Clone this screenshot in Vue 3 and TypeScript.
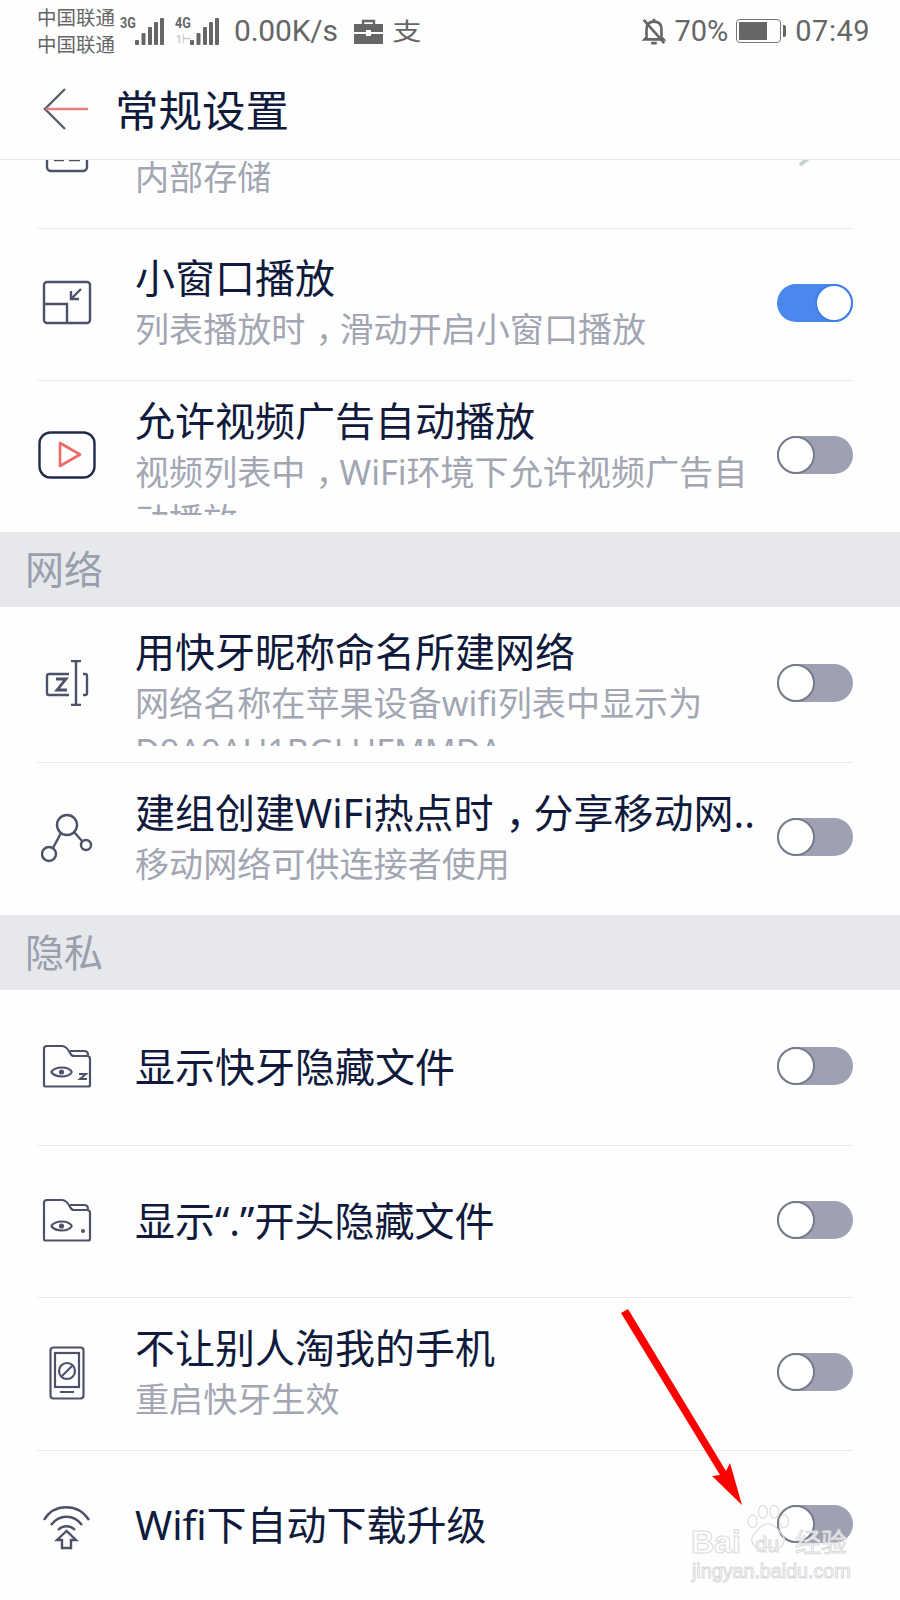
<script setup lang="ts">
type Row = {
  icon: string;
  title: string;
  sub?: string;
  on?: boolean;
  height: number;
};

type Section = { name?: string; rows: Row[] };

const sections: Section[] = [
  {
    rows: [
      { icon: "pip", title: "小窗口播放", sub: "列表播放时，滑动开启小窗口播放", on: true, height: 152 },
      {
        icon: "video",
        title: "允许视频广告自动播放",
        sub: "视频列表中，WiFi环境下允许视频广告自动播放",
        height: 151,
      },
    ],
  },
  {
    name: "网络",
    rows: [
      {
        icon: "rename",
        title: "用快牙昵称命名所建网络",
        sub: "网络名称在苹果设备wifi列表中显示为 D9A9AU1BGLUFMMDA",
        height: 156,
      },
      { icon: "share", title: "建组创建WiFi热点时，分享移动网..", sub: "移动网络可供连接者使用", height: 152 },
    ],
  },
  {
    name: "隐私",
    rows: [
      { icon: "hideZ", title: "显示快牙隐藏文件", height: 156 },
      { icon: "hideDot", title: "显示“.”开头隐藏文件", height: 152 },
      { icon: "phone", title: "不让别人淘我的手机", sub: "重启快牙生效", height: 153 },
      { icon: "wifi", title: "Wifi下自动下载升级", height: 150 },
    ],
  },
];

// the comma sits in the middle of its cell on this phone's font
const parts = (s: string) => s.split("，");
</script>

<template>
  <div class="screen">
    <div class="status">
      <div class="carriers"><span>中国联通</span><span>中国联通</span></div>
      <div class="signal">
        <span class="net">3G</span>
        <svg width="29" height="27" viewBox="0 0 29 27"><g fill="#666">
          <rect x="0" y="22" width="4" height="5" rx="1" /><rect x="6.500" y="15" width="4" height="12" rx="1" /><rect x="13" y="9" width="4" height="18" rx="1" /><rect x="19" y="4" width="4" height="23" rx="1" /><rect x="25" y="0" width="4" height="27" rx="1" />
        </g></svg>
      </div>
      <div class="signal second">
        <span class="net">4G<i>1⊢</i></span>
        <svg width="29" height="27" viewBox="0 0 29 27"><g fill="#666">
          <rect x="0" y="22" width="4" height="5" rx="1" /><rect x="6.500" y="15" width="4" height="12" rx="1" /><rect x="13" y="9" width="4" height="18" rx="1" /><rect x="19" y="4" width="4" height="23" rx="1" /><rect x="25" y="0" width="4" height="27" rx="1" />
        </g></svg>
      </div>
      <span class="speed">0.00K/s</span>
      <svg class="case" width="29" height="25" viewBox="0 0 29 25">
        <path d="M9 5V2h11v3" fill="none" stroke="#666" stroke-width="2.4" />
        <path d="M0 5h29v8H17v-2h-5v2H0zM0 15h12v2h5v-2h12v10H0z" fill="#666" />
      </svg>
      <span class="alipay">支</span>
      <div class="spacer"></div>
      <svg class="bell" width="26" height="28" viewBox="0 0 26 30" fill="none" stroke="#666" stroke-width="2.800">
        <path d="M5 22V13c0-5 3-8 8-8s8 3 8 8v9l2 2H3z" />
        <path d="M13 2v3M10 28h6M2 3l22 25" />
      </svg>
      <span class="pct">70%</span>
      <div class="battery"><div class="level"></div></div>
      <div class="nub"></div>
      <span class="clock">07:49</span>
    </div>

    <header class="bar">
      <svg class="back" width="46" height="44" viewBox="0 0 46 44" fill="none" stroke-width="2.4">
        <path d="M22 2 2 22l20 20" stroke="#5a5f6e" />
        <path d="M3 22h42" stroke="#f07c7c" />
      </svg>
      <h1>常规设置</h1>
    </header>

    <div class="list">
      <div class="row first">
        <div class="icon">
          <svg width="44" height="44" viewBox="0 0 44 44" fill="none" stroke="#4d5268" stroke-width="2.4">
            <rect x="2" y="2" width="40" height="40" rx="4" />
            <path d="M9 31h10M24 31h11" />
          </svg>
        </div>
        <div class="text">
          <div class="title">存储位置</div>
          <div class="sub">内部存储</div>
        </div>
        <svg class="chev" width="22" height="34" viewBox="0 0 22 34" fill="none" stroke="#c6d0d2" stroke-width="4">
          <path d="M3 5l15 12L3 29" />
        </svg>
      </div>

      <template v-for="sec in sections" :key="sec.name ?? 'top'">
        <div v-if="sec.name" class="section">{{ sec.name }}</div>
        <div
          v-for="row in sec.rows"
          :key="row.title"
          class="row"
          :class="{ tall: row.icon === 'rename' }"
          :style="{ height: row.height + 'px' }"
        >
          <div class="icon">
            <svg v-if="row.icon === 'pip'" width="50" height="46" viewBox="0 0 50 46" fill="none" stroke="#4d5268" stroke-width="2.4">
              <rect x="2" y="2" width="46" height="41" rx="3" />
              <path d="M2 24h23v19" />
              <path d="M39 9 29 19M29 11v8h8" />
            </svg>
            <svg v-else-if="row.icon === 'video'" width="58" height="48" viewBox="0 0 58 48" fill="none">
              <rect x="1.500" y="1.500" width="55" height="45" rx="11" stroke="#23294a" stroke-width="2.4" />
              <path d="M22 12v23l20-11.500z" stroke="#ee6a68" stroke-width="2.600" stroke-linejoin="round" />
            </svg>
            <svg v-else-if="row.icon === 'rename'" width="44" height="46" viewBox="0 0 44 46" fill="none" stroke="#4d5268" stroke-width="2.4">
              <path d="M24 14H4c-1.500 0-2 1-2 2v17c0 1 .5 2 2 2h20" />
              <path d="M31 1v44M26 1h10M26 45h10" />
              <path d="M38 14h2c1 0 2 1 2 2v17c0 1-1 2-2 2h-2" />
              <path d="M11 19h10l-9 11h10" stroke-width="2.800" />
            </svg>
            <svg v-else-if="row.icon === 'share'" width="52" height="50" viewBox="0 0 52 50" fill="none" stroke="#4d5268" stroke-width="2.4">
              <circle cx="26" cy="12" r="10" />
              <circle cx="8" cy="41" r="7" />
              <circle cx="45" cy="32" r="5" />
              <path d="M20 20 12 35M33 19l8 9" />
            </svg>
            <svg v-else-if="row.icon === 'hideZ' || row.icon === 'hideDot'" width="50" height="44" viewBox="0 0 50 44" fill="none" stroke="#4d5268" stroke-width="2.2">
              <path d="M2 41V5c0-2 1-3 3-3h15c4 0 6 3 8 7 1 2 2 3 4 3h13c2 0 3 1 3 3v26c0 1-1 1.500-2 1.500H3c-.5 0-1-.5-1-1.500z" />
              <path d="M28 7h14c2 0 4 1 4 4" />
              <path d="M9 28c5-6 17-6 21 0M9 28c5 6 17 6 21 0" />
              <circle cx="19.500" cy="28" r="2.600" fill="#4d5268" stroke="none" />
              <path v-if="row.icon === 'hideZ'" d="M37 30h7l-6 5h7" stroke-width="2" />
              <circle v-else cx="41" cy="33" r="2" fill="#4d5268" stroke="none" />
            </svg>
            <svg v-else-if="row.icon === 'phone'" width="36" height="54" viewBox="0 0 36 54" fill="none" stroke="#4d5268" stroke-width="2.2">
              <rect x="1.500" y="1.500" width="33" height="51" rx="3" />
              <rect x="6" y="7" width="24" height="34" />
              <circle cx="18" cy="25" r="8" />
              <path d="m13 30 10-10M11 46h14" />
            </svg>
            <svg v-else width="50" height="50" viewBox="0 0 50 50" fill="none" stroke="#4d5268" stroke-width="2.4">
              <path d="M2 20C12 3 36 3 47 20M9 25c8-11 23-11 31 0M16 30c5-5 12-5 17 0" />
              <path d="M24.500 31 15 40h5v8h9v-8h5z" />
            </svg>
          </div>
          <div class="text">
            <div class="title">
              <template v-for="(p, i) in parts(row.title)" :key="i"><span v-if="i" class="comma">，</span>{{ p }}</template>
            </div>
            <div v-if="row.sub" class="sub">
              <template v-for="(p, i) in parts(row.sub)" :key="i"><span v-if="i" class="comma">，</span>{{ p }}</template>
            </div>
          </div>
          <div class="toggle" :class="{ on: row.on }"><div class="knob"></div></div>
        </div>
      </template>
    </div>

    <svg class="arrow" width="900" height="1600" viewBox="0 0 900 1600">
      <path d="M621 1313l7-4 98 162 4-8 12 42-30-29 8-1z" fill="#ff0000" />
    </svg>

    <div class="mark">
      <svg class="paw" width="46" height="52" viewBox="0 0 72 76" fill="none" stroke="#dedede" stroke-width="2">
        <ellipse cx="12" cy="26" rx="7" ry="10" />
        <ellipse cx="28" cy="11" rx="7" ry="10" />
        <ellipse cx="46" cy="11" rx="7" ry="10" />
        <ellipse cx="61" cy="26" rx="7" ry="10" />
        <path d="M36 30c11 0 15 9 22 16 7 8 2 23-10 22-5 0-8-2-12-2s-7 2-12 2C12 69 7 54 14 46c7-7 11-16 22-16z" />
      </svg>
      <span class="bai">Bai</span>
      <span class="du">du</span>
      <span class="jy">经验</span>
      <span class="url">jingyan.baidu.com</span>
    </div>
  </div>
</template>

<style>
body {
  background: #fff;
}
</style>

<style scoped>
.screen {
  position: relative;
  width: 900px;
  height: 1600px;
  overflow: hidden;
  background: #fefefe;
  display: flex;
  flex-direction: column;
  font-family: "Noto Sans", "Noto Sans CJK SC", sans-serif;
  color: #0f1a3c;
}

.status {
  height: 62px;
  padding: 0 30px 0 37px;
  display: flex;
  align-items: center;
  color: #666;
  flex: none;
}

.carriers {
  display: flex;
  flex-direction: column;
  font-size: 19.500px;
  line-height: 27.500px;
  width: 83px;
}

.signal {
  display: flex;
  align-items: flex-end;
  height: 27px;
}

.second {
  margin-left: 11px;
}

.net {
  position: relative;
  align-self: flex-start;
  font: 700 14px/11px "Roboto", sans-serif;
  transform: scaleX(0.9);
  transform-origin: left;
  width: 15px;
}

.net i {
  position: absolute;
  left: 1px;
  top: 16px;
  font: 700 11px/11px "Roboto", sans-serif;
  color: #ccc;
}

.speed {
  margin-left: 15px;
  font: 400 30px/30px "Roboto", sans-serif;
  letter-spacing: -0.200px;
}

.case {
  margin-left: 16px;
}

.alipay {
  margin-left: 10px;
  font-size: 28px;
  line-height: 30px;
  transform: scale(1.05, 0.85);
}

.spacer {
  flex: 1;
}

.pct {
  margin-left: 7px;
  font: 400 29px/30px "Roboto", sans-serif;
}

.battery {
  margin-left: 8px;
  width: 45px;
  height: 24px;
  border: 1.500px solid #777;
  border-radius: 4px;
  padding: 2px;
  box-sizing: border-box;
}

.level {
  width: 28px;
  height: 100%;
  background: #666;
}

.nub {
  width: 3px;
  height: 12px;
  margin-left: 2px;
  background: #666;
  border-radius: 0 2px 2px 0;
}

.clock {
  margin-left: 9px;
  font: 400 29px/30px "Roboto", sans-serif;
  letter-spacing: 0.500px;
}

.bar {
  height: 98px;
  flex: none;
  padding-left: 43px;
  display: flex;
  align-items: center;
  gap: 26px;
  border-bottom: 1px solid #e4e6e8;
  box-sizing: border-box;
}

.back {
  margin-bottom: 4px;
}

.bar h1 {
  margin: 0 0 2px;
  font-size: 43.500px;
  font-weight: 400;
  line-height: 50px;
  color: #0f1a3c;
}

.list {
  flex: 1;
  min-height: 0;
  overflow: hidden;
}

.row {
  margin: 0 47px 0 37px;
  display: flex;
  align-items: center;
  border-bottom: 1px solid #e8e9ec;
  box-sizing: border-box;
}

.row:has(+ .section),
.row:last-child {
  border-bottom: none;
}

.first {
  height: 152px;
  margin-top: -83px;
}

.icon {
  width: 60px;
  flex: none;
  display: flex;
  justify-content: center;
  margin-bottom: 3px;
}

.text {
  margin-left: 38px;
  flex: 1;
  min-width: 0;
  padding-bottom: 2px;
}

.text:has(.sub) {
  padding-bottom: 3px;
}

.tall .text {
  padding-top: 6px;
}

.title {
  font-size: 40px;
  line-height: 50px;
  white-space: nowrap;
}

.title:has(+ .sub) {
  margin-bottom: 2px;
}

.sub {
  font-size: 34.100px;
  line-height: 48px;
  max-height: 67px;
  overflow: hidden;
  color: #a2a6b3;
}

.comma {
  display: inline-block;
  transform: translateX(0.3em);
}

.chev {
  margin-right: 34px;
}

.toggle {
  width: 76px;
  height: 38px;
  flex: none;
  margin-left: 14px;
  margin-bottom: 4px;
  border-radius: 19px;
  background: #9ea1b1;
  position: relative;
}

.knob {
  position: absolute;
  left: 0;
  top: 0;
  width: 38px;
  height: 38px;
  box-sizing: border-box;
  border: 2px solid #757a8d;
  border-radius: 50%;
  background: #fff;
}

.toggle.on {
  background: #4a88ee;
}

.toggle.on .knob {
  left: auto;
  right: 0;
  border-color: #3d7fec;
}

.section {
  height: 75px;
  box-sizing: border-box;
  padding: 0 0 6px 25px;
  display: flex;
  align-items: center;
  background: #e6e8ec;
  color: #9a9fae;
  font-size: 39px;
}

.arrow {
  position: absolute;
  left: 0;
  top: 0;
  pointer-events: none;
}

.mark {
  position: absolute;
  left: 688px;
  top: 1500px;
  width: 170px;
  height: 84px;
  font-family: "Liberation Sans", "Noto Sans CJK SC", sans-serif;
}

.mark span {
  position: absolute;
  color: rgba(255, 255, 255, 0.8);
  -webkit-text-stroke: 1px #dadada;
  white-space: nowrap;
}

.paw {
  position: absolute;
  left: 57px;
  top: 3px;
}

.bai {
  left: 3px;
  top: 26px;
  font-size: 32px;
  line-height: 32px;
  font-weight: 700;
}

.du {
  left: 67px;
  top: 33px;
  font-size: 22px;
  line-height: 24px;
}

.jy {
  left: 107px;
  top: 24px;
  font-size: 26px;
  line-height: 34px;
  font-family: "Noto Sans CJK SC", sans-serif;
}

.url {
  left: 4px;
  top: 59px;
  font-size: 19.700px;
  line-height: 24px;
}
</style>
